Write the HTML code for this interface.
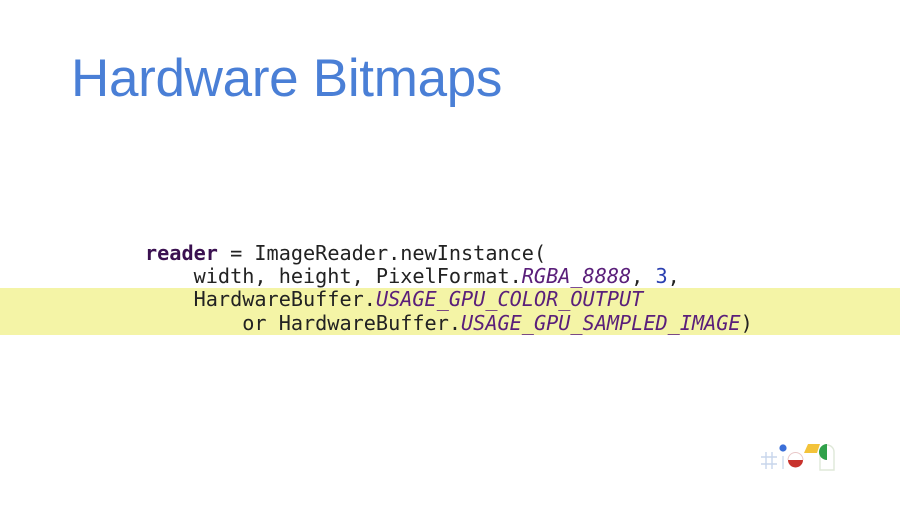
<!DOCTYPE html>
<html><head><meta charset="utf-8"><style>
html,body{margin:0;padding:0;}
body{width:900px;height:505px;background:#fff;position:relative;overflow:hidden;font-family:"Liberation Sans",sans-serif;}
.title{position:absolute;left:71px;top:48px;font-size:53px;color:#4a7fd6;letter-spacing:-0.3px;white-space:nowrap;}
.hl{position:absolute;left:0;top:288px;width:900px;height:47px;background:#f4f4a6;}
.code{position:absolute;left:145px;top:242px;font-family:"DejaVu Sans Mono","Liberation Mono",monospace;font-size:20.2px;line-height:23.2px;color:#222;white-space:pre;}
.k{color:#3a1050;font-weight:bold;}
.i{color:#5a1f7a;font-style:italic;}
.n{color:#2a3fb0;}
</style></head><body>
<div class="title">Hardware Bitmaps</div>
<div class="hl"></div>
<div class="code"><span class="k">reader</span> = ImageReader.newInstance(
    width, height, PixelFormat.<span class="i">RGBA_8888</span>, <span class="n">3</span>,
    HardwareBuffer.<span class="i">USAGE_GPU_COLOR_OUTPUT</span>
        or HardwareBuffer.<span class="i">USAGE_GPU_SAMPLED_IMAGE</span>)</div>
<svg style="position:absolute;left:758px;top:438px" width="80" height="36" viewBox="0 0 80 36">
<g stroke="#c8d6ec" stroke-width="1.4" fill="none">
<path d="M8 14v17M14 14v17M3 19h16M3 26h16"/>
</g>
<rect x="24" y="18" width="2" height="13" fill="#dde6f2"/>
<circle cx="25" cy="10" r="3.6" fill="#3b6fd8"/>
<path d="M30 22h15a7.5 7.5 0 0 1-15 0z" fill="#c8322c"/>
<path d="M30 22a7.5 7.5 0 0 1 15 0" fill="none" stroke="#e8c8c8" stroke-width="1"/>
<path d="M50 6h12l-3 9h-13z" fill="#f3c33a"/>
<path d="M62 32v-18a7 7 0 0 1 14 0v18z" fill="none" stroke="#dfe8d8" stroke-width="1.4"/>
<path d="M69 6a8 8 0 0 0 0 16z" fill="#2fa14a"/>
</svg>
</body></html>
